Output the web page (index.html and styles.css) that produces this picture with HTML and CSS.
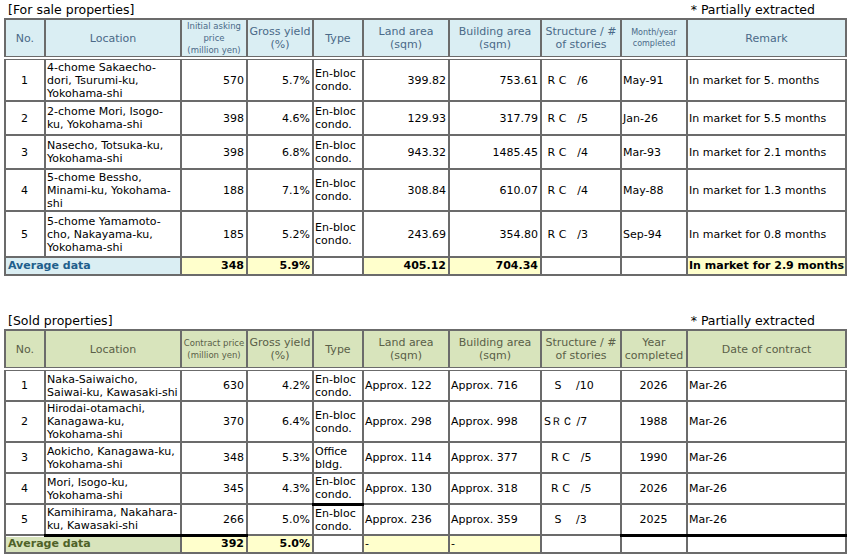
FILE: index.html
```html
<!DOCTYPE html>
<html>
<head>
<meta charset="utf-8">
<link rel="stylesheet" href="styles.css">
</head>
<body>
<div class="page">
  <div class="caption">
    <span class="cap-left">[For sale properties]</span>
    <span class="cap-right">* Partially extracted</span>
  </div>
  <table class="grid sale">
    <colgroup>
      <col class="c-no"><col class="c-loc"><col class="c-price"><col class="c-yield"><col class="c-type"><col class="c-land"><col class="c-bldg"><col class="c-str"><col class="c-date"><col class="c-rem">
    </colgroup>
    <thead>
      <tr class="h-head">
        <th>No.</th>
        <th>Location</th>
        <th class="tiny">Initial asking<br>price<br>(million yen)</th>
        <th>Gross yield<br>(%)</th>
        <th>Type</th>
        <th>Land area<br>(sqm)</th>
        <th>Building area<br>(sqm)</th>
        <th>Structure / #<br>of stories</th>
        <th class="tinier">Month/year<br>completed</th>
        <th>Remark</th>
      </tr>
    </thead>
    <tbody>
      <tr class="h43">
        <td class="ctr">1</td>
        <td>4-chome Sakaecho-<br>dori, Tsurumi-ku,<br>Yokohama-shi</td>
        <td class="num">570</td>
        <td class="num">5.7%</td>
        <td>En-bloc<br>condo.</td>
        <td class="num">399.82</td>
        <td class="num">753.61</td>
        <td class="str"> R C　/6</td>
        <td>May-91</td>
        <td>In market for 5. months</td>
      </tr>
      <tr class="h34">
        <td class="ctr">2</td>
        <td>2-chome Mori, Isogo-<br>ku, Yokohama-shi</td>
        <td class="num">398</td>
        <td class="num">4.6%</td>
        <td>En-bloc<br>condo.</td>
        <td class="num">129.93</td>
        <td class="num">317.79</td>
        <td class="str"> R C　/5</td>
        <td>Jan-26</td>
        <td>In market for 5.5 months</td>
      </tr>
      <tr class="h34">
        <td class="ctr">3</td>
        <td>Nasecho, Totsuka-ku,<br>Yokohama-shi</td>
        <td class="num">398</td>
        <td class="num">6.8%</td>
        <td>En-bloc<br>condo.</td>
        <td class="num">943.32</td>
        <td class="num">1485.45</td>
        <td class="str"> R C　/4</td>
        <td>Mar-93</td>
        <td>In market for 2.1 months</td>
      </tr>
      <tr class="h42">
        <td class="ctr">4</td>
        <td>5-chome Bessho,<br>Minami-ku, Yokohama-<br>shi</td>
        <td class="num">188</td>
        <td class="num">7.1%</td>
        <td>En-bloc<br>condo.</td>
        <td class="num">308.84</td>
        <td class="num">610.07</td>
        <td class="str"> R C　/4</td>
        <td>May-88</td>
        <td>In market for 1.3 months</td>
      </tr>
      <tr class="h46">
        <td class="ctr">5</td>
        <td>5-chome Yamamoto-<br>cho, Nakayama-ku,<br>Yokohama-shi</td>
        <td class="num">185</td>
        <td class="num">5.2%</td>
        <td>En-bloc<br>condo.</td>
        <td class="num">243.69</td>
        <td class="num">354.80</td>
        <td class="str top-black"> R C　/3</td>
        <td>Sep-94</td>
        <td>In market for 0.8 months</td>
      </tr>
      <tr class="avg">
        <td colspan="2" class="avg-label">Average data</td>
        <td class="num yel">348</td>
        <td class="num yel">5.9%</td>
        <td></td>
        <td class="num yel">405.12</td>
        <td class="num yel">704.34</td>
        <td></td>
        <td></td>
        <td class="yel">In market for 2.9 months</td>
      </tr>
    </tbody>
  </table>

  <div class="caption second">
    <span class="cap-left">[Sold properties]</span>
    <span class="cap-right">* Partially extracted</span>
  </div>
  <table class="grid sold">
    <colgroup>
      <col class="c-no"><col class="c-loc"><col class="c-price"><col class="c-yield"><col class="c-type"><col class="c-land"><col class="c-bldg"><col class="c-str"><col class="c-date"><col class="c-rem">
    </colgroup>
    <thead>
      <tr class="h-head2">
        <th>No.</th>
        <th>Location</th>
        <th class="tiny">Contract price<br>(million yen)</th>
        <th>Gross yield<br>(%)</th>
        <th>Type</th>
        <th>Land area<br>(sqm)</th>
        <th>Building area<br>(sqm)</th>
        <th>Structure / #<br>of stories</th>
        <th>Year<br>completed</th>
        <th>Date of contract</th>
      </tr>
    </thead>
    <tbody>
      <tr class="s33">
        <td class="ctr">1</td>
        <td>Naka-Saiwaicho,<br>Saiwai-ku, Kawasaki-shi</td>
        <td class="num">630</td>
        <td class="num">4.2%</td>
        <td>En-bloc<br>condo.</td>
        <td>Approx. 122</td>
        <td>Approx. 716</td>
        <td class="str">   S　 /10</td>
        <td class="ctr">2026</td>
        <td>Mar-26</td>
      </tr>
      <tr class="s37">
        <td class="ctr">2</td>
        <td>Hirodai-otamachi,<br>Kanagawa-ku,<br>Yokohama-shi</td>
        <td class="num">370</td>
        <td class="num">6.4%</td>
        <td>En-bloc<br>condo.</td>
        <td>Approx. 298</td>
        <td>Approx. 998</td>
        <td class="str">SＲＣ /7</td>
        <td class="ctr">1988</td>
        <td>Mar-26</td>
      </tr>
      <tr class="s32">
        <td class="ctr">3</td>
        <td>Aokicho, Kanagawa-ku,<br>Yokohama-shi</td>
        <td class="num">348</td>
        <td class="num">5.3%</td>
        <td>Office<br>bldg.</td>
        <td>Approx. 114</td>
        <td>Approx. 377</td>
        <td class="str">  R C　/5</td>
        <td class="ctr">1990</td>
        <td>Mar-26</td>
      </tr>
      <tr class="s31">
        <td class="ctr">4</td>
        <td>Mori, Isogo-ku,<br>Yokohama-shi</td>
        <td class="num">345</td>
        <td class="num">4.3%</td>
        <td class="bot-black">En-bloc<br>condo.</td>
        <td>Approx. 130</td>
        <td>Approx. 318</td>
        <td class="str">  R C　/5</td>
        <td class="ctr">2026</td>
        <td>Mar-26</td>
      </tr>
      <tr class="s32">
        <td class="ctr">5</td>
        <td class="bot-black">Kamihirama, Nakahara-<br>ku, Kawasaki-shi</td>
        <td class="num bot-black">266</td>
        <td class="num">5.0%</td>
        <td>En-bloc<br>condo.</td>
        <td>Approx. 236</td>
        <td>Approx. 359</td>
        <td class="str">   S　 /3</td>
        <td class="ctr bot-black">2025</td>
        <td class="bot-black">Mar-26</td>
      </tr>
      <tr class="avg">
        <td colspan="2" class="avg-label">Average data</td>
        <td class="num yel">392</td>
        <td class="num yel">5.0%</td>
        <td></td>
        <td class="yel plain">-</td>
        <td class="yel plain">-</td>
        <td></td>
        <td></td>
        <td></td>
      </tr>
    </tbody>
  </table>
</div>
</body>
</html>
```

FILE: styles.css
```css
html, body {
  margin: 0;
  padding: 0;
  background: #ffffff;
}

.page {
  padding: 0 4px;
  font-family: "DejaVu Sans", Verdana, sans-serif;
  font-size: 11px;
  color: #000;
}

.caption {
  display: flex;
  justify-content: space-between;
  align-items: flex-end;
  height: 18px;
  padding: 0 30px 0 4px;
  font-size: 12.5px;
  line-height: 16px;
}

.caption.second {
  margin-top: 35px;
  height: 18px;
}

.grid {
  border-collapse: collapse;
  table-layout: fixed;
  width: 841px;
  border: 2px solid #6b6b6b;
}

.c-no { width: 40px; }
.c-loc { width: 136px; }
.c-price { width: 66px; }
.c-yield { width: 66px; }
.c-type { width: 50px; }
.c-land { width: 86px; }
.c-bldg { width: 92px; }
.c-str { width: 80px; }
.c-date { width: 66px; }
.c-rem { width: 159px; }

.grid th,
.grid td {
  border: 2px solid #6b6b6b;
  padding: 0 2px 0 1px;
  line-height: 13px;
  vertical-align: middle;
  text-align: left;
  white-space: nowrap;
  overflow: hidden;
}

.grid th {
  font-weight: normal;
  text-align: center;
  border-bottom: 4px double #6b6b6b;
  padding: 0 1px;
}

.sale th {
  background: #daeef3;
  color: #4a6a88;
}

.sold th {
  background: #d8e4bc;
  color: #5a5f48;
}

.grid th.tiny {
  font-size: 8.5px;
  line-height: 12px;
}

.grid th.tinier {
  font-size: 8px;
  line-height: 11px;
}

.h-head { height: 39px; }
.h-head2 { height: 39px; }
.h43 { height: 43px; }
.h34 { height: 34px; }
.h42 { height: 42px; }
.h46 { height: 46px; }
.s33 { height: 32px; }
.s37 { height: 36px; }
.s32 { height: 31px; }
.s31 { height: 31px; }

.avg { height: 18px; }
.avg td {
  line-height: 14px;
  font-weight: bold;
}
.avg td.plain { font-weight: normal; }

.grid td.ctr { text-align: center; }
.grid td.num { text-align: right; }
.grid td.str { white-space: pre; padding-left: 2px; }

.sale .avg-label {
  background: #daeef3;
  color: #1f5f8c;
  padding-left: 2px;
}

.sold .avg-label {
  background: #d8e4bc;
  color: #4f6228;
  padding-left: 2px;
}

.grid td.yel { background: #ffffcc; }

.grid td.top-black { border-top: 2px solid #000; }
.grid td.bot-black { border-bottom: 3px solid #000; }
```
